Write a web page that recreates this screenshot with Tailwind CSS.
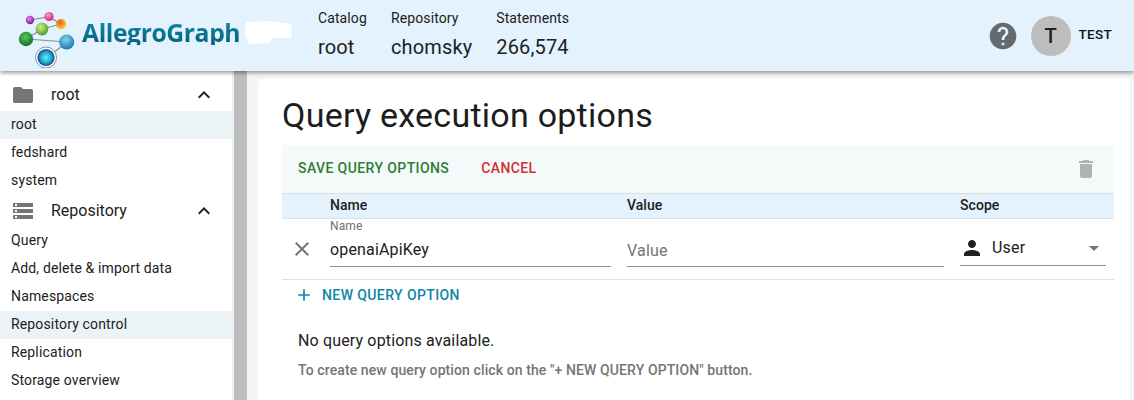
<!DOCTYPE html>
<html lang="en">
<head>
    <meta charset="UTF-8">
    <title>AllegroGraph</title>
    <script src="https://cdn.jsdelivr.net/npm/@tailwindcss/browser@4"></script>
</head>
<body class="bg-[#f5f5f5] font-['Roboto',sans-serif] text-[#212121] overflow-hidden">
    <div class="w-[1134px] h-[400px] flex flex-col overflow-hidden">
        <!-- Header -->
        <header class="relative z-10 h-[71px] shrink-0 bg-[#e3f2fd] shadow-[0_2px_4px_rgba(0,0,0,0.4)] flex items-center">
            <div class="w-[318px] shrink-0 flex items-center">
                <svg class="ml-[18px] shrink-0" width="60" height="64" viewBox="0 0 60 64">
                    <defs>
                        <radialGradient id="purple" cx="0.4" cy="0.35" r="0.7"><stop offset="0" stop-color="#e58be8"/><stop offset="1" stop-color="#7d1488"/></radialGradient>
                        <radialGradient id="pink" cx="0.4" cy="0.35" r="0.7"><stop offset="0" stop-color="#ff9cc8"/><stop offset="1" stop-color="#d81a72"/></radialGradient>
                        <radialGradient id="orange" cx="0.4" cy="0.35" r="0.7"><stop offset="0" stop-color="#e8534a"/><stop offset="0.6" stop-color="#f6a81f"/><stop offset="1" stop-color="#f7d84a"/></radialGradient>
                        <radialGradient id="lime" cx="0.4" cy="0.35" r="0.7"><stop offset="0" stop-color="#d9ee7a"/><stop offset="1" stop-color="#3f9a34"/></radialGradient>
                        <radialGradient id="green" cx="0.45" cy="0.35" r="0.7"><stop offset="0" stop-color="#5cc45a"/><stop offset="1" stop-color="#10682a"/></radialGradient>
                        <radialGradient id="blue" cx="0.45" cy="0.35" r="0.7"><stop offset="0" stop-color="#7fd4ee"/><stop offset="1" stop-color="#1470ac"/></radialGradient>
                        <radialGradient id="ring" cx="0.5" cy="0.5" r="0.5"><stop offset="0" stop-color="#6fe6ee"/><stop offset="0.6" stop-color="#22aed0"/><stop offset="1" stop-color="#1a3f8f"/></radialGradient>
                    </defs>
                    <g stroke="#8a8f94" stroke-width="1.2" fill="none">
                        <path d="M12 16 L31 13 L43 20 M24 25 L43 20 M24 25 L8 35 M8 35 L49 38 M49 38 L29 54"/>
                    </g>
                    <circle cx="12" cy="16" r="4.2" fill="url(#purple)"/>
                    <circle cx="31" cy="12.5" r="4.6" fill="url(#pink)"/>
                    <circle cx="43" cy="20" r="5.2" fill="url(#orange)"/>
                    <circle cx="24" cy="25" r="6.4" fill="url(#lime)"/>
                    <circle cx="8" cy="35" r="7.2" fill="url(#green)"/>
                    <circle cx="48.7" cy="38" r="7.6" fill="url(#blue)"/>
                    <circle cx="28" cy="53.5" r="10.5" fill="#fff" stroke="#8a8f94" stroke-width="1"/>
                    <circle cx="28" cy="53.5" r="8.6" fill="url(#ring)"/>
                </svg>
                <span class="ml-[4px] mb-[5px] text-[24.7px] leading-none font-['Open_Sans',sans-serif] font-bold tracking-[-0.4px] bg-gradient-to-b from-[#0f8aa8] to-[#075f7a] bg-clip-text text-transparent">AllegroGraph</span>
                <svg class="ml-[5px] mb-[5px] shrink-0" width="48" height="24" viewBox="0 0 48 24" fill="#fff">
                    <path d="M1 1 L24 0 L46 3 L47 12 L46 17 L28 17 L24 22 L3 23 L0 12 Z"/>
                </svg>
            </div>
            <div class="flex gap-[24px] mb-[4px]">
                <div class="flex flex-col">
                    <span class="text-[14px] leading-[20px] tracking-[0.1px]">Catalog</span>
                    <span class="mt-[7px] text-[20px] leading-[24px] tracking-[0.15px]">root</span>
                </div>
                <div class="flex flex-col">
                    <span class="text-[14px] leading-[20px] tracking-[0.13px]">Repository</span>
                    <span class="mt-[7px] text-[20px] leading-[24px] tracking-[0.15px]">chomsky</span>
                </div>
                <div class="flex flex-col">
                    <span class="text-[14px] leading-[20px] tracking-[0.1px]">Statements</span>
                    <span class="mt-[7px] text-[20px] leading-[24px] tracking-[0.15px]">266,574</span>
                </div>
            </div>
            <div class="ml-auto flex items-center pr-[22px]">
                <svg width="32" height="32" viewBox="0 0 24 24" fill="#646b70">
                    <path d="M12 2C6.48 2 2 6.48 2 12s4.48 10 10 10 10-4.48 10-10S17.52 2 12 2zm1 17h-2v-2h2v2zm2.07-7.75l-.9.92C13.45 12.9 13 13.5 13 15h-2v-.5c0-1.1.45-2.1 1.17-2.83l1.24-1.26c.37-.36.59-.86.59-1.41 0-1.1-.9-2-2-2s-2 .9-2 2H8c0-2.21 1.79-4 4-4s4 1.79 4 4c0 .88-.36 1.68-.93 2.25z"/>
                </svg>
                <div class="ml-[12px] w-[40px] h-[40px] rounded-full bg-[#bdbdbd] flex items-center justify-center text-[20px] font-medium">T</div>
                <span class="ml-[8px] mb-[2px] text-[13.5px] font-medium text-[#111] tracking-[0.3px]">TEST</span>
            </div>
        </header>

        <div class="flex flex-1 min-h-0">
            <!-- Sidebar -->
            <aside class="w-[232px] shrink-0 bg-white pt-[8px] text-[14px] leading-[26px] tracking-[0.15px]">
                <div class="h-[32px] flex items-center pl-[12px] pr-[16px] text-[16px] tracking-normal">
                    <svg width="24" height="24" viewBox="0 0 24 24" fill="#757575" class="-ml-[1px]"><path d="M10 4H4c-1.1 0-2 .9-2 2v12c0 1.1.9 2 2 2h16c1.1 0 2-.9 2-2V8c0-1.1-.9-2-2-2h-8l-2-2z"/></svg>
                    <span class="ml-[16px]">root</span>
                    <svg width="24" height="24" viewBox="0 0 24 24" fill="#212121" class="ml-auto"><path d="M7.41 15.41L12 10.83l4.59 4.58L18 14l-6-6-6 6z"/></svg>
                </div>
                <div class="h-[28px] pl-[11px] bg-[#ebf3f6]">root</div>
                <div class="h-[28px] pl-[11px]">fedshard</div>
                <div class="h-[28px] pl-[11px]">system</div>
                <div class="h-[32px] flex items-center pl-[12px] pr-[16px] text-[16px] tracking-normal">
                    <svg width="24" height="24" viewBox="0 0 24 24" fill="#757575" class="-ml-[1px]"><path d="M2 20h20v-4H2v4zm2-3h2v2H4v-2zM2 4v4h20V4H2zm4 3H4V5h2v2zm-4 7h20v-4H2v4zm2-3h2v2H4v-2z"/></svg>
                    <span class="ml-[16px]">Repository</span>
                    <svg width="24" height="24" viewBox="0 0 24 24" fill="#212121" class="ml-auto"><path d="M7.41 15.41L12 10.83l4.59 4.58L18 14l-6-6-6 6z"/></svg>
                </div>
                <div class="h-[28px] pl-[11px]">Query</div>
                <div class="h-[28px] pl-[11px]">Add, delete &amp; import data</div>
                <div class="h-[28px] pl-[11px]">Namespaces</div>
                <div class="h-[28px] pl-[11px] bg-[#ebf3f6]">Repository control</div>
                <div class="h-[28px] pl-[11px]">Replication</div>
                <div class="h-[28px] pl-[11px]">Storage overview</div>
            </aside>
            <div class="w-[2px] shrink-0 bg-[#f0f0f0]"></div>
            <div class="w-[13px] shrink-0 bg-[#bdbdbd]"></div>

            <!-- Main -->
            <main class="flex-1 min-w-0 pl-[11px] pr-[4px] pt-[8px]">
                <div class="bg-white rounded-t-[4px] h-[400px] pl-[24px] pr-[16px] pt-[16px]">
                    <h1 class="text-[34px] leading-[40px] h-[50px] tracking-[0.25px] text-[#1c1c1c]">Query execution options</h1>
                    <div class="h-[48px] bg-[#f4fafa] flex items-center pl-[16px] pr-[16px] text-[14px] font-medium tracking-[0.4px]">
                        <span class="text-[#2e7d32] mb-[2px]">SAVE QUERY OPTIONS</span>
                        <span class="ml-[32px] text-[#d32f2f] mb-[2px]">CANCEL</span>
                        <svg width="24" height="24" viewBox="0 0 24 24" fill="#b0b3b3" class="ml-auto"><path d="M6 19c0 1.1.9 2 2 2h8c1.1 0 2-.9 2-2V7H6v12zM19 4h-3.5l-1-1h-5l-1 1H5v2h14V4z"/></svg>
                    </div>
                    <div class="h-[26px] bg-[#e3f2fd] border-y border-[#dcdfe2] flex items-center pb-[2px] text-[14px] font-medium tracking-[0.05px]">
                        <span class="ml-[48px] w-[297px]">Name</span>
                        <span class="w-[333px]">Value</span>
                        <span>Scope</span>
                    </div>
                    <div class="h-[61px] border-b border-[#e0e0e0] flex items-start relative">
                        <svg width="24" height="24" viewBox="0 0 24 24" fill="#757575" class="absolute left-[8px] top-[18px]"><path d="M19 6.41L17.59 5 12 10.59 6.41 5 5 6.41 10.59 12 5 17.59 6.41 19 12 13.41 17.59 19 19 17.59 13.41 12z"/></svg>
                        <div class="ml-[48px] w-[281px] h-[48px] border-b border-[#8f8f8f] flex flex-col">
                            <span class="text-[12px] leading-[14px] text-[#6f6f6f] tracking-[0.1px]">Name</span>
                            <span class="mt-[5px] text-[16px] leading-[24px] tracking-[0.15px]">openaiApiKey</span>
                        </div>
                        <div class="ml-[16px] w-[317px] h-[48px] border-b border-[#8f8f8f] flex flex-col justify-end pb-[3px]">
                            <span class="text-[16px] leading-[24px] text-[#757575] tracking-[0.2px]">Value</span>
                        </div>
                        <div class="ml-[16px] w-[146px] h-[47px] border-b border-[#8f8f8f] flex items-center pt-[11px]">
                            <svg width="24" height="24" viewBox="0 0 24 24" fill="#212121"><path d="M12 12c2.21 0 4-1.79 4-4s-1.79-4-4-4-4 1.79-4 4 1.79 4 4 4zm0 2c-2.67 0-8 1.34-8 4v2h16v-2c0-2.66-5.33-4-8-4z"/></svg>
                            <span class="ml-[8px] text-[16px] tracking-[0.2px]">User</span>
                            <svg width="24" height="24" viewBox="0 0 24 24" fill="#757575" class="ml-auto"><path d="M7 10l5 5 5-5z"/></svg>
                        </div>
                    </div>
                    <div class="h-[30px] flex items-center pl-[14px] text-[14px] font-medium tracking-[0.4px] text-[#0e86a6]">
                        <svg width="20" height="20" viewBox="0 0 24 24" fill="#0e86a6" class="-ml-[2px]"><path d="M19 13h-6v6h-2v-6H5v-2h6V5h2v6h6v2z"/></svg>
                        <span class="ml-[8px]">NEW QUERY OPTION</span>
                    </div>
                    <div class="pl-[16px] mt-[19px] text-[16px] leading-[24px] tracking-[0.15px]">No query options available.</div>
                    <div class="pl-[16px] mt-[7px] text-[14px] leading-[20px] font-medium text-[#757575] tracking-[0.1px]">To create new query option click on the "+ NEW QUERY OPTION" button.</div>
                </div>
            </main>
        </div>
    </div>
</body>
</html>
